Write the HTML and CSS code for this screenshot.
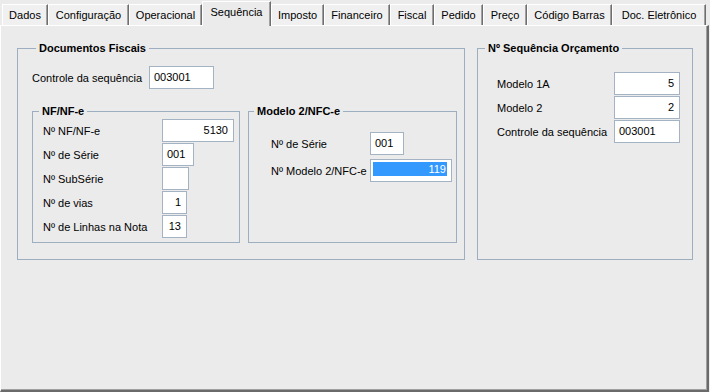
FILE: index.html
```html
<!DOCTYPE html>
<html lang="pt-BR">
<head>
  <meta charset="UTF-8" />
  <title>Sequência</title>
  <link rel="stylesheet" href="styles.css">
</head>
<body>
  <div class="tabs">
    <div class="tab">Dados</div>
    <div class="tab">Configuração</div>
    <div class="tab">Operacional</div>
    <div class="tab active">Sequência</div>
    <div class="tab">Imposto</div>
    <div class="tab">Financeiro</div>
    <div class="tab">Fiscal</div>
    <div class="tab">Pedido</div>
    <div class="tab">Preço</div>
    <div class="tab">Código Barras</div>
    <div class="tab">Doc. Eletrônico</div>
  </div>

  <div class="panel">
    <div class="groups">
      <fieldset class="group docs">
        <legend>Documentos Fiscais</legend>
        <div class="docs-body">
          <div class="row-ctrl">
            <span>Controle da sequência</span>
            <div class="field w65">003001</div>
          </div>

          <div class="subgroups">
            <fieldset class="group nf">
              <legend>NF/NF-e</legend>
              <div class="nf-body">
                <span>Nº NF/NF-e</span>
                <div class="field num w72">5130</div>
                <span>Nº de Série</span>
                <div class="field w32">001</div>
                <span>Nº SubSérie</span>
                <div class="field w27"></div>
                <span>Nº de vias</span>
                <div class="field num w25">1</div>
                <span>Nº de Linhas na Nota</span>
                <div class="field num w25">13</div>
              </div>
            </fieldset>

            <fieldset class="group nfc">
              <legend>Modelo 2/NFC-e</legend>
              <div class="nfc-body">
                <span>Nº de Série</span>
                <div class="field w34">001</div>
                <span>Nº Modelo 2/NFC-e</span>
                <div class="field sel w82"><span>119</span></div>
              </div>
            </fieldset>
          </div>
        </div>
      </fieldset>

      <fieldset class="group orc">
        <legend>Nº Sequência Orçamento</legend>
        <div class="orc-body">
          <span>Modelo 1A</span>
          <div class="field num">5</div>
          <span>Modelo 2</span>
          <div class="field num">2</div>
          <span>Controle da sequência</span>
          <div class="field">003001</div>
        </div>
      </fieldset>
    </div>
  </div>
</body>
</html>
```

FILE: styles.css
```css
body {
  margin: 0;
  width: 710px;
  height: 392px;
  overflow: hidden;
  background: #ebebeb;
  font-family: 'Liberation Sans', Arial, sans-serif;
  font-size: 11px;
  color: #000;
}

/* tab strip */
.tabs {
  display: grid;
  grid-template-columns: 46px 81px 73px 69px 53px 66px 44px 49px 44px 85px 94px;
  align-items: end;
  height: 25px;
  padding-left: 2px;
}
.tab {
  box-sizing: border-box;
  height: 21px;
  line-height: 20px;
  text-align: center;
  white-space: nowrap;
  background: #f0f0f0;
  border-top: 1px solid #fff;
  border-left: 1px solid #fff;
  border-right: 1px solid #6e6e6e;
  box-shadow: inset -1px 0 #a0a0a0;
}
.tab.active {
  position: relative;
  z-index: 1;
  height: 25px;
  margin-bottom: -1px;
  line-height: 21px;
  background: #ebebeb;
}

/* page body */
.panel {
  box-sizing: border-box;
  width: 709px;
  height: 367px;
  padding: 16px 0 0 16px;
  border-top: 1px solid #fff;
  border-left: 1px solid #fff;
  border-right: 2px solid #6a6a6a;
  border-bottom: 2px solid #6a6a6a;
  box-shadow: inset -1px -1px #a0a0a0;
}
.groups {
  display: flex;
  gap: 12px;
}

.group {
  margin: 0;
  padding: 0;
  min-width: 0;
  border: 1px solid #9caebf;
}
.group legend {
  padding: 0 3px;
  line-height: 13px;
  font-weight: bold;
}

.docs { width: 448px; box-sizing: border-box; }
.docs legend { margin-left: 18px; }
.docs-body {
  padding: 11px 7px 16px 14px;
}
.row-ctrl {
  display: grid;
  grid-template-columns: 117px 65px;
  align-items: center;
  height: 23px;
}
.subgroups {
  display: flex;
  gap: 8px;
  margin-top: 16px;
}

.nf { width: 208px; box-sizing: border-box; }
.nf legend { margin-left: 6px; }
.nf-body {
  display: grid;
  grid-template-columns: 119px auto;
  grid-auto-rows: 23px;
  row-gap: 1px;
  align-items: center;
  padding: 1px 0 4px 10px;
}

.nfc { flex: 1; }
.nfc legend { margin-left: 5px; }
.nfc-body {
  display: grid;
  grid-template-columns: 99px auto;
  grid-auto-rows: 23px;
  row-gap: 4px;
  align-items: center;
  padding: 14px 0 0 22px;
}

.orc { width: 216px; box-sizing: border-box; }
.orc legend { margin-left: 7px; }
.orc-body {
  display: grid;
  grid-template-columns: 117px 66px;
  grid-auto-rows: 23px;
  row-gap: 1px;
  align-items: center;
  padding: 17px 0 0 19px;
}

/* edit boxes */
.field {
  box-sizing: border-box;
  height: 23px;
  padding: 0 4px;
  line-height: 20px;
  background: #fff;
  border: 1px solid #a3b3c3;
  white-space: nowrap;
}
.field.num {
  text-align: right;
  padding-right: 5px;
}
.field.sel {
  padding: 2px 4px 0 2px;
}
.field.sel span {
  display: block;
  height: 14px;
  line-height: 14px;
  padding-right: 1px;
  text-align: right;
  color: #fff;
  background: #3399ff;
}

.w25 { width: 25px; }
.w27 { width: 27px; }
.w32 { width: 32px; }
.w34 { width: 34px; }
.w65 { width: 65px; }
.w72 { width: 72px; }
.w82 { width: 82px; }
```
